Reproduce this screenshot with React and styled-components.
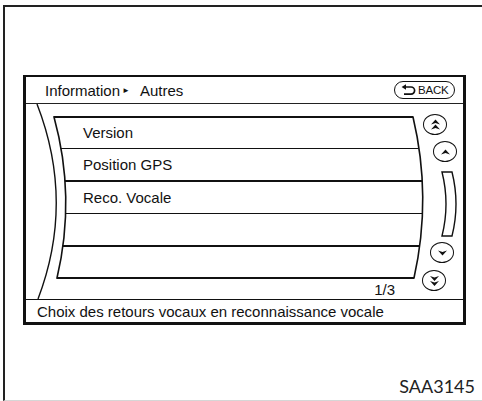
import React from 'react';
import styled, { createGlobalStyle } from 'styled-components';

const GlobalStyle = createGlobalStyle`
  body {
    margin: 0;
    background: #fff;
    font-family: "Liberation Sans", Arial, sans-serif;
    color: #111;
  }
`;

const rows = ['Version', 'Position GPS', 'Reco. Vocale', '', ''];

// list outline in the list's own coordinates (371 x 161)
const listShape = 'M0,0 L359,0 Q378,80 360,161 L3,161 Q22,80 0,0 Z';

const Frame = styled.div`
  box-sizing: border-box;
  height: 396px;
  margin: 5px 0 0 3px;
  padding: 68px 0 0 18px;
  border-top: 2px solid #222;
  border-left: 2px solid #222;
  border-bottom: 1px solid #d6d6d6;
  display: flex;
  flex-direction: column;
`;

const Panel = styled.div`
  box-sizing: border-box;
  width: 443px;
  height: 250px;
  border: 3px solid #111;
  border-top-width: 2px;
  display: flex;
  flex-direction: column;
`;

const Header = styled.div`
  height: 27px;
  border-bottom: 1px solid #222;
  display: flex;
  align-items: center;
  justify-content: space-between;
  padding: 0 8px 0 19px;
  font-size: 15px;
`;

const Crumb = styled.div`
  display: flex;
  align-items: center;
`;

const Arrow = styled.span`
  font-size: 8px;
  margin: 1px 10px 0 2px;
`;

const BackButton = styled.div`
  box-sizing: border-box;
  width: 61px;
  height: 18px;
  border: 1.5px solid #111;
  border-radius: 9px;
  display: flex;
  align-items: center;
  gap: 2px;
  padding-left: 6px;
  font-size: 11.5px;
  letter-spacing: -0.2px;
`;

const Body = styled.div`
  position: relative;
  height: 195px;
  display: flex;
`;

const Arc = styled.svg`
  position: absolute;
  left: 0;
  top: 0;
`;

const Main = styled.div`
  margin-left: 28px;
  padding-top: 13px;
  width: 371px;
  display: flex;
  flex-direction: column;
`;

const ListWrap = styled.div`
  position: relative;
  width: 371px;
  height: 161px;
`;

const ListClip = styled.div`
  height: 100%;
  clip-path: path('${listShape}');
  display: flex;
  flex-direction: column;
`;

const Edges = styled.svg`
  position: absolute;
  left: 0;
  top: 0;
  overflow: visible;
  pointer-events: none;
`;

const Row = styled.div`
  box-sizing: border-box;
  flex: 1;
  display: flex;
  align-items: center;
  padding-left: 29px;
  font-size: 15px;
  border-bottom: ${(p) => (p.$thick ? 2 : 1.3)}px solid #111;
  &:last-child {
    border-bottom: none;
  }
`;

const PageNo = styled.div`
  margin-top: 3px;
  height: 18px;
  line-height: 18px;
  text-align: right;
  padding-right: 30px;
  font-size: 15px;
`;

const ScrollCol = styled.div`
  margin-left: -4px;
  width: 36px;
  padding-top: 10px;
  display: flex;
  flex-direction: column;
  align-items: flex-start;
`;

const RoundBtn = styled.div`
  box-sizing: border-box;
  width: 24px;
  height: 21px;
  margin-left: ${(p) => p.$shift}px;
  margin-top: ${(p) => p.$gap}px;
  border: 1.6px solid #111;
  border-radius: 50%;
  display: flex;
  align-items: center;
  justify-content: center;
`;

const Bar = styled.svg`
  margin-left: ${(p) => p.$shift}px;
  margin-top: ${(p) => p.$gap}px;
`;

const Footer = styled.div`
  height: 22px;
  border-top: 1px solid #111;
  display: flex;
  align-items: center;
  padding-left: 11px;
  font-size: 15px;
`;

const Code = styled.div`
  margin-top: 51px;
  align-self: flex-end;
  padding-right: 7px;
  font-family: Lato, "Open Sans", sans-serif;
  font-size: 18px;
  line-height: 20px;
  color: #222;
`;

const BackIcon = () => (
  <svg width="15" height="12" viewBox="0 0 15 12">
    <path d="M4 3 H10 A3.6 3.6 0 0 1 10 10.2 H3" fill="none" stroke="#111" strokeWidth="1.7" />
    <path d="M0.6 3 L5 0.2 L5 5.8 Z" fill="#111" />
  </svg>
);

// one filled arrowhead, 9 wide and 5 tall, starting at height y
const head = (y, dir) =>
  dir === 'up'
    ? `M6 ${y + 5} L10.5 ${y} L15 ${y + 5} L10.5 ${y + 3.4} Z`
    : `M6 ${y} L10.5 ${y + 5} L15 ${y} L10.5 ${y + 1.6} Z`;

const Chevrons = ({ dir, double }) => (
  <svg width="21" height="18" viewBox="0 0 21 18">
    {double ? (
      <>
        <path d={head(dir === 'up' ? 3.5 : 4, dir)} fill="#111" />
        <path d={head(dir === 'up' ? 8.5 : 9, dir)} fill="#111" />
      </>
    ) : (
      <path d={head(6.5, dir)} fill="#111" />
    )}
  </svg>
);

const App = () => (
  <>
    <GlobalStyle />
    <Frame>
      <Panel>
        <Header>
          <Crumb>
            <span>Information</span>
            <Arrow>►</Arrow>
            <span>Autres</span>
          </Crumb>
          <BackButton>
            <BackIcon />
            BACK
          </BackButton>
        </Header>
        <Body>
          <Arc width="60" height="195" viewBox="0 0 60 195">
            <path d="M11 0 Q49 98 12 195" fill="none" stroke="#111" strokeWidth="1.4" />
          </Arc>
          <Main>
            <ListWrap>
              <ListClip>
                {rows.map((label, i) => (
                  <Row key={i} $thick={i === 1 || i === 3}>
                    {label}
                  </Row>
                ))}
              </ListClip>
              <Edges width="371" height="161" viewBox="0 0 371 161">
                <path d={listShape} fill="none" stroke="#111" strokeWidth="1.6" />
                <path d="M0 0 H359 M3 161 H360" stroke="#111" strokeWidth="2.2" />
              </Edges>
            </ListWrap>
            <PageNo>1/3</PageNo>
          </Main>
          <ScrollCol>
            <RoundBtn $shift={2} $gap={0}>
              <Chevrons dir="up" double />
            </RoundBtn>
            <RoundBtn $shift={12} $gap={6}>
              <Chevrons dir="up" />
            </RoundBtn>
            <Bar $shift={20} $gap={9} width="16" height="66" viewBox="0 0 16 66">
              <path d="M1 1 Q9 33 1 65 L11 65 Q19 33 11 1 Z" fill="none" stroke="#111" strokeWidth="1.4" />
            </Bar>
            <RoundBtn $shift={9} $gap={5}>
              <Chevrons dir="down" />
            </RoundBtn>
            <RoundBtn $shift={1} $gap={7}>
              <Chevrons dir="down" double />
            </RoundBtn>
          </ScrollCol>
        </Body>
        <Footer>Choix des retours vocaux en reconnaissance vocale</Footer>
      </Panel>
      <Code>SAA3145</Code>
    </Frame>
  </>
);

export default App;
